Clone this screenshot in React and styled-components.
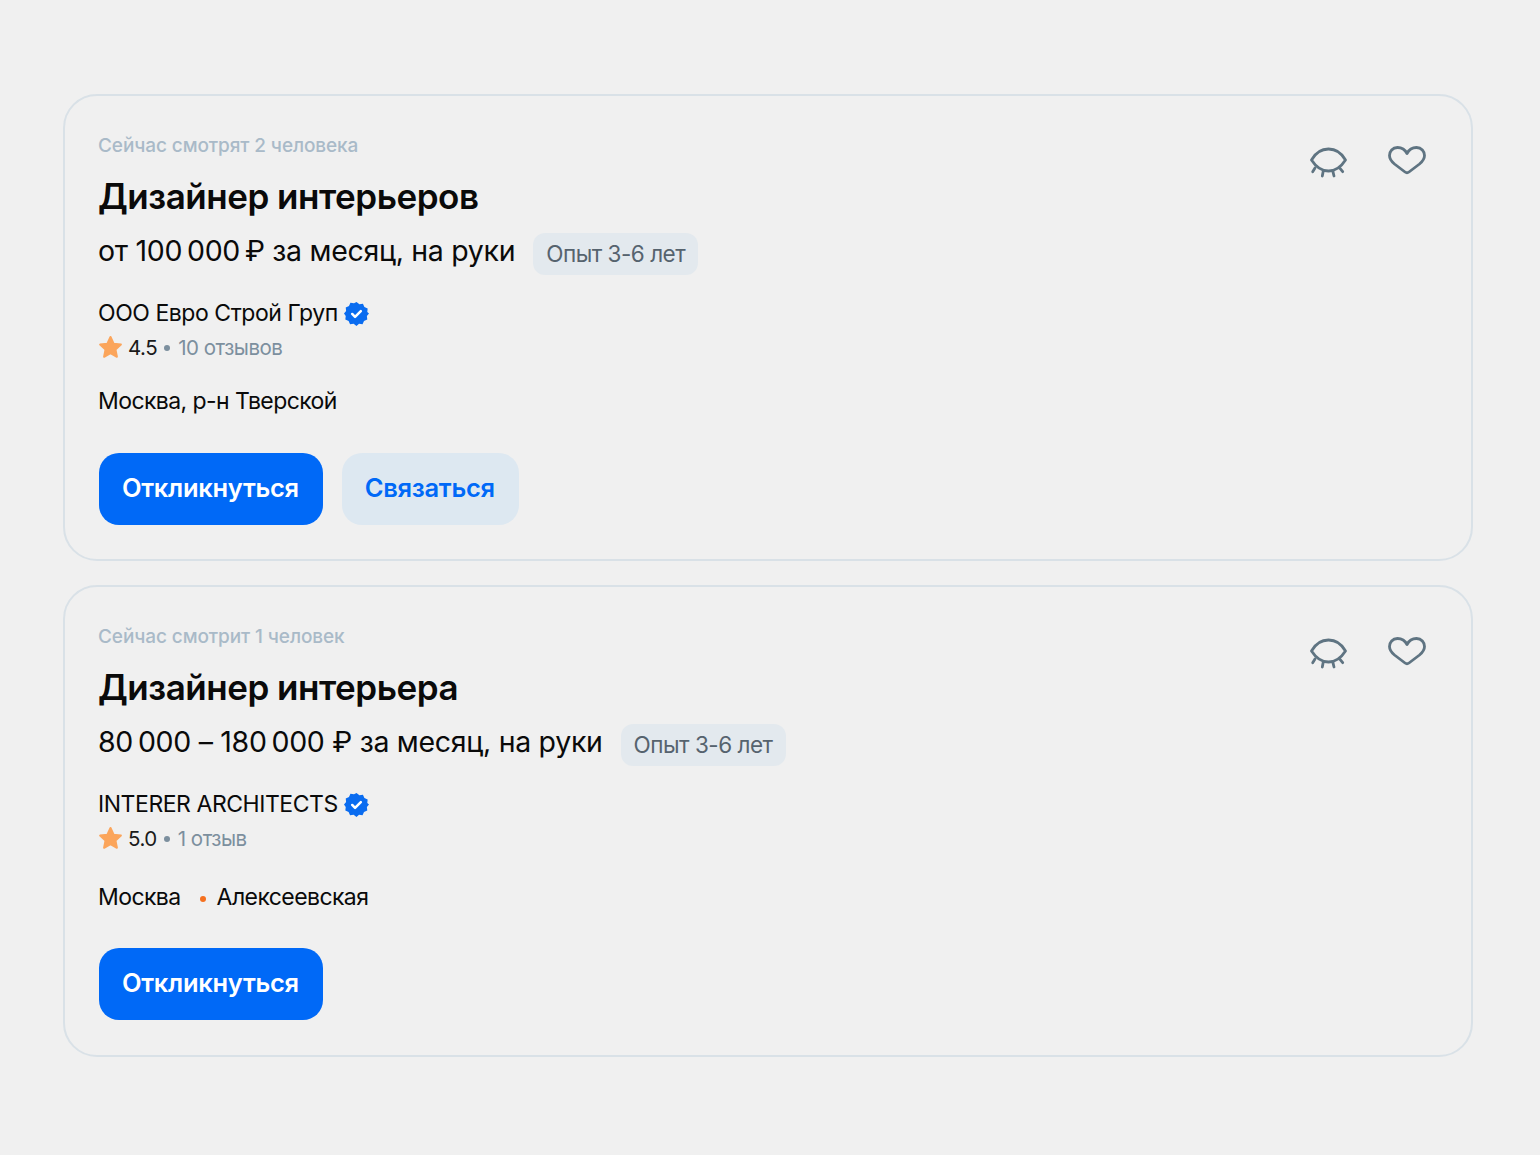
import React from 'react'
import styled, { createGlobalStyle } from 'styled-components'

const Global = createGlobalStyle`
  html, body {
    margin: 0;
    background: #f0f0f0;
    font-family: Inter, "Noto Sans", sans-serif;
  }
`;

const Page = styled.div`
  display: flex;
  flex-direction: column;
  gap: 24px;
  padding: 94px 67px 98px 63px;
  height: 1155px;
  box-sizing: border-box;
`;

const Card = styled.article`
  display: flex;
  justify-content: space-between;
  box-sizing: border-box;
  height: ${p => p.$height}px;
  padding: 38px 44px 0 33px;
  border: 2px solid #d9e1e7;
  border-radius: 34px;
`;

const Content = styled.div`
  display: flex;
  flex-direction: column;
  align-items: flex-start;
`;

const Viewers = styled.div`
  font-size: 19px;
  font-weight: 500;
  line-height: 24px;
  letter-spacing: -0.1px;
  color: #a9bac8;
`;

const Title = styled.h2`
  margin: 17px 0 0;
  font-size: 35px;
  line-height: 42px;
  font-weight: 600;
  letter-spacing: -0.48px;
  color: #0a0a0a;
`;

const SalaryRow = styled.div`
  display: flex;
  align-items: flex-start;
  gap: 18px;
  margin-top: 16px;
`;

const Salary = styled.div`
  font-size: 28.5px;
  line-height: 36px;
  letter-spacing: -0.3px;
  color: #0a0a0a;
`;

const Badge = styled.span`
  display: block;
  padding: 0 13px;
  height: 42px;
  line-height: 42px;
  border-radius: 12px;
  background: #e3e9ee;
  color: #56636e;
  font-size: 22.5px;
  letter-spacing: -0.5px;
`;

const Company = styled.div`
  display: flex;
  align-items: center;
  gap: 6px;
  margin-top: 21px;
  font-size: 23px;
  line-height: 34px;
  letter-spacing: -0.45px;
  color: #0a0a0a;
`;

const Rating = styled.div`
  display: flex;
  align-items: center;
  height: 34px;
  font-size: 20.5px;
  letter-spacing: -0.5px;
  color: #1a1a1a;
`;

const Score = styled.span`
  margin-left: 5px;
`;

const Dot = styled.span`
  width: 6px;
  height: 6px;
  border-radius: 50%;
  background: ${p => p.$color};
  margin: ${p => p.$margin};
  flex: none;
`;

const Reviews = styled.span`
  color: #7c8f9e;
`;

const Place = styled.div`
  display: flex;
  align-items: center;
  margin-top: ${p => p.$top}px;
  font-size: 23px;
  line-height: 32px;
  letter-spacing: -0.58px;
  color: #0a0a0a;
`;

const Buttons = styled.div`
  display: flex;
  gap: 19px;
  margin: ${p => p.$top}px 0 0 1px;
`;

const Button = styled.button`
  height: 72px;
  padding: 0 24px 4px 23px;
  border: 0;
  border-radius: 20px;
  font-family: inherit;
  font-size: 25.5px;
  font-weight: 600;
  letter-spacing: -0.3px;
  background: ${p => (p.$light ? '#dde8f1' : '#0069f7')};
  color: ${p => (p.$light ? '#0069f7' : '#ffffff')};
`;

const Actions = styled.div`
  display: flex;
  align-items: flex-start;
  gap: 38px;
  margin-top: 11px;
`;

const Eye = () => (
  <svg width="40" height="34" viewBox="0 -1 40 34" fill="none" stroke="#5f7482" strokeWidth="2.8" strokeLinecap="round" strokeLinejoin="round">
    <path d="M2.500 14C7 6 13 3 19.500 3S32 6 36.500 14C32 21 26 25 19.500 25S7 21 2.500 14Z" />
    <path d="M6 22 3.700 25.700M14.300 24.700 13.300 30M23.700 24.700 25 30M31 22.300 33.700 25.700" />
  </svg>
);

const Heart = () => (
  <svg width="40" height="32" viewBox="0 0 40 32" fill="none" stroke="#5f7482" strokeWidth="2.8" strokeLinejoin="round">
    <path d="M20 8.500C18 4.500 14 2.500 10.500 2.500 5.500 2.500 2.500 6.500 2.500 10.500 2.500 14 4.500 16.500 7.500 19L18 27Q20 28.500 22 27L32.500 19C35.500 16.500 37.500 14 37.500 10.500 37.500 6.500 34.500 2.500 29.500 2.500 26 2.500 22 4.500 20 8.500Z" />
  </svg>
);

const Verified = () => (
  <svg width="25" height="25" viewBox="0 0 26 26">
    <path fill="#0a6cf0" d="M13 1l3 2.300 3.700-.4 1.500 3.400 3.400 1.500-.4 3.700L26 13l-2.200 2.500.4 3.700-3.400 1.500-1.500 3.400-3.700-.4L13 26l-3-2.300-3.700.4-1.500-3.400-3.400-1.500.4-3.700L0 13l2.200-2.500-.4-3.700 3.400-1.500 1.500-3.400 3.700.4L13 1Z" />
    <path fill="none" stroke="#fff" strokeWidth="2.600" strokeLinecap="round" strokeLinejoin="round" d="M8.500 13.500l3 3 6-6" />
  </svg>
);

const Star = () => (
  <svg width="25" height="24" viewBox="0 0 25 24">
    <path fill="#fba55b" stroke="#fba55b" strokeWidth="2" strokeLinejoin="round" d="M12.500 2l3.100 6.700 7.300.9-5.400 5 1.400 7.200-6.400-3.600-6.400 3.600 1.400-7.200-5.400-5 7.300-.9L12.500 2Z" />
  </svg>
);

const Vacancy = ({ height, viewers, title, salary, company, score, reviews, placeTop, buttonsTop, place, metro, contact }) => (
  <Card $height={height}>
    <Content>
      <Viewers>{viewers}</Viewers>
      <Title>{title}</Title>
      <SalaryRow>
        <Salary>{salary}</Salary>
        <Badge>Опыт 3-6 лет</Badge>
      </SalaryRow>
      <Company>
        {company}
        <Verified />
      </Company>
      <Rating>
        <Star />
        <Score>{score}</Score>
        <Dot $color="#7c8f9e" $margin="2px 8px 0 7px" />
        <Reviews>{reviews}</Reviews>
      </Rating>
      <Place $top={placeTop}>
        {place}
        {metro && <Dot $color="#f5701f" $margin="3px 11px 0 19px" />}
        {metro}
      </Place>
      <Buttons $top={buttonsTop}>
        <Button>Откликнуться</Button>
        {contact && <Button $light>Связаться</Button>}
      </Buttons>
    </Content>
    <Actions>
      <Eye />
      <Heart />
    </Actions>
  </Card>
);

export default function App() {
  return (
    <>
      <Global />
      <Page>
        <Vacancy
          height={467}
          viewers="Сейчас смотрят 2 человека"
          title="Дизайнер интерьеров"
          salary={"от 100\u2009000\u2009₽ за месяц, на руки"}
          company="ООО Евро Строй Груп"
          score="4.5"
          reviews="10 отзывов"
          placeTop={21}
          buttonsTop={36}
          place="Москва, р-н Тверской"
          contact
        />
        <Vacancy
          height={472}
          viewers="Сейчас смотрит 1 человек"
          title="Дизайнер интерьера"
          salary={"80\u2009000 – 180\u2009000 ₽ за месяц, на руки"}
          company="INTERER ARCHITECTS"
          score="5.0"
          reviews="1 отзыв"
          placeTop={26}
          buttonsTop={35}
          place="Москва"
          metro="Алексеевская"
        />
      </Page>
    </>
  )
}
